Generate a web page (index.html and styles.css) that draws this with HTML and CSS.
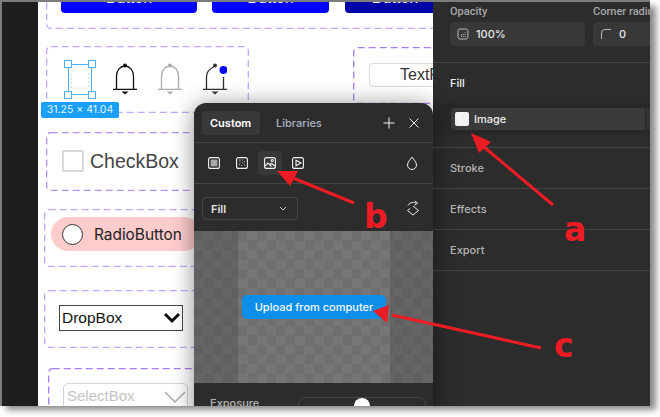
FILE: index.html
```html
<!DOCTYPE html>
<html lang="en">
<head>
    <meta charset="UTF-8">
    <title>Image fill</title>
    <link rel="stylesheet" href="styles.css">
</head>
<body>
<div class="shot">
    <div class="rail"></div>

    <div class="canvas">
        <svg class="frame frame-buttons"><rect/></svg>
        <div class="btn btn-1">Button</div>
        <div class="btn btn-2">Button</div>
        <div class="btn btn-3">Button</div>

        <svg class="frame frame-bells"><rect/></svg>
        <svg class="bell bell-ghost" viewBox="0 0 24 34"><path d="M3.5 27V14a8.5 10 0 0 1 17 0V27H3.5z"/></svg>
        <div class="selection">
            <i class="handle h-tl"></i><i class="handle h-tr"></i><i class="handle h-bl"></i><i class="handle h-br"></i>
        </div>
        <div class="size-tag">31.25 × 41.04</div>
        <svg class="bell bell-black" viewBox="0 0 24 34">
            <path d="M3.5 27V14a8.5 10 0 0 1 17 0V27M0 27.3H24"/>
            <circle cx="12" cy="3.5" r="2"/><path class="fill" d="M8.5 29.5h7l-3.5 3z"/>
        </svg>
        <svg class="bell bell-grey" viewBox="0 0 24 34">
            <path d="M3.5 27V14a8.5 10 0 0 1 17 0V27M0 27.3H24"/>
            <circle cx="12" cy="3.5" r="2"/><path class="fill" d="M8.5 29.5h7l-3.5 3z"/>
        </svg>
        <svg class="bell bell-dot" viewBox="0 0 24 34">
            <path d="M3.5 27V14c0-4 3-7 8.5-10M20.5 15V27M0 27.3H24"/>
            <circle cx="12" cy="3.5" r="2"/><path class="fill" d="M8.5 29.5h7l-3.5 3z"/>
            <circle class="dot" cx="20.5" cy="8" r="4"/>
        </svg>

        <svg class="frame frame-text dark"><rect/></svg>
        <div class="textfield">TextField</div>

        <svg class="frame frame-check mid"><rect/></svg>
        <div class="checkbox"><span class="check-box"></span>CheckBox</div>

        <svg class="frame frame-radio"><rect/></svg>
        <div class="radio"><span class="radio-dot"></span>RadioButton</div>

        <svg class="frame frame-drop"><rect/></svg>
        <div class="dropbox">DropBox
            <svg class="chev" viewBox="0 0 18 12"><path d="M2 2l7 7 7-7"/></svg>
        </div>

        <svg class="frame frame-select dark"><rect/></svg>
        <div class="selectbox">SelectBox
            <svg class="chev-thin" viewBox="0 0 22 14"><path d="M1 2l10 10L21 2"/></svg>
        </div>
    </div>

    <div class="inspector">
        <div class="props">
            <div class="prop">
                <div class="prop-label">Opacity</div>
                <div class="field">
                    <svg class="ico" viewBox="0 0 12 12"><rect x="1" y="1" width="10" height="10" rx="2"/><path class="dots" d="M8 4v5M5 7v2M9 6.5H3M9 8.5H3"/></svg>
                    100%
                </div>
            </div>
            <div class="prop">
                <div class="prop-label">Corner radius</div>
                <div class="field">
                    <svg class="ico" viewBox="0 0 12 12"><path d="M1.5 11V5a3.5 3.5 0 0 1 3.5-3.5h6"/></svg>
                    0
                </div>
            </div>
        </div>
        <div class="section-head bright">Fill</div>
        <div class="fill-band">
            <div class="fill-row">
                <span class="swatch"></span>Image
            </div>
            <div class="fill-rest"></div>
        </div>
        <div class="section-head line-top">Stroke</div>
        <div class="section-head line-top">Effects</div>
        <div class="section-head line-top line-bottom">Export</div>
    </div>

    <div class="popover">
        <div class="pop-head">
            <span class="tab active">Custom</span>
            <span class="tab">Libraries</span>
            <svg class="head-ico plus" viewBox="0 0 12 12"><path d="M6 .5v11M.5 6h11"/></svg>
            <svg class="head-ico close" viewBox="0 0 10 10"><path d="M.5.5l9 9M9.5.5l-9 9"/></svg>
        </div>
        <div class="pop-types">
            <span class="type">
                <svg viewBox="0 0 12 12"><rect x=".6" y=".6" width="10.8" height="10.8" rx="2"/><rect class="solid" x="2.6" y="2.6" width="6.8" height="6.8"/></svg>
            </span>
            <span class="type">
                <svg viewBox="0 0 12 12"><rect x=".6" y=".6" width="10.8" height="10.8" rx="2"/><path class="dots" d="M3 3h1.5M6 3h1M8 4.5h1M3.5 5h1M6 6h1.5M3 7.5h1M5 8.5h1M8 8h1"/></svg>
            </span>
            <span class="type active">
                <svg viewBox="0 0 12 12"><rect x=".6" y=".6" width="10.8" height="10.8" rx="2"/><path d="M1 9l3-3 3.5 3.5M6 7.5l1.5-1L11 9"/><circle cx="8.2" cy="3.6" r="1.1"/></svg>
            </span>
            <span class="type">
                <svg viewBox="0 0 12 12"><rect x=".6" y=".6" width="10.8" height="10.8" rx="2"/><path d="M4 3.2v5.6L9 6z"/></svg>
            </span>
            <svg class="drop" viewBox="0 0 12 14"><path d="M6 1C4.500 3.500 1.500 6 1.500 9a4.500 4.500 0 0 0 9 0C10.500 6 7.500 3.500 6 1z"/></svg>
        </div>
        <div class="pop-mode">
            <div class="mode-select">Fill
                <svg class="mini-chev" viewBox="0 0 8 5"><path d="M1 1l3 3 3-3"/></svg>
            </div>
            <svg class="swap" viewBox="0 0 14 16"><path d="M7 6l5.500 4.500L7 15 1.500 10.500 4 8.500M2 5.500C3 3 6.500 1.500 10 3M9 .8l2.500 2.500L8.500 5"/></svg>
        </div>
        <div class="preview">
            <div class="preview-image"></div>
            <div class="upload">Upload from computer</div>
        </div>
        <div class="pop-foot">
            <span class="foot-label">Exposure</span>
            <div class="slider"><span class="knob"></span></div>
        </div>
    </div>

    <svg class="marks" viewBox="0 0 660 417">
        <path d="M553 205L484 147"/>
        <path class="head" d="M471 133L491 142L479 153z"/>
        <path d="M354 203L293 178"/>
        <path class="head" d="M277 171L298 171L290 186z"/>
        <path d="M541 348L392 315"/>
        <path class="head" d="M373 311L389 305L387 323z"/>
        <text x="564" y="241">a</text>
        <text x="364" y="228">b</text>
        <text x="554" y="357">c</text>
    </svg>
</div>
</body>
</html>
```

FILE: styles.css
```css
* {
    box-sizing: border-box;
}
body {
    margin: 0;
    background: #fff;
    font-family: Inter, "Liberation Sans", sans-serif;
}
.shot {
    position: relative;
    width: 650px;
    height: 406px;
    display: flex;
    overflow: hidden;
    border-top: 2px solid #7c7c7c;
    border-left: 2px solid #7c7c7c;
}
body::after {
    content: "";
    position: absolute;
    left: 6px;
    top: 6px;
    width: 650px;
    height: 404px;
    background: #8a8a8a;
    filter: blur(3px);
    z-index: -1;
}
.rail {
    width: 36px;
    background: #1e1e1e;
}

/* canvas, everything on it sits where the designer dropped it */
.canvas {
    position: relative;
    width: 395px;
    background: #fff;
    overflow: hidden;
}
.frame {
    position: absolute;
    fill: none;
    stroke: #c6a5fc;
    stroke-width: 1.3;
    stroke-dasharray: 7 4;
}
.frame rect {
    x: 0.7px;
    y: 0.7px;
    width: calc(100% - 1.4px);
    height: calc(100% - 1.4px);
    rx: 4px;
}
.frame.mid {
    stroke: #b88ff8;
}
.frame.dark {
    stroke: #a77cf0;
}
.frame-buttons { left: 8px; top: -30px; width: 420px; height: 57px; }
.frame-bells { left: 8px; top: 44px; width: 203px; height: 67px; }
.frame-text { left: 315px; top: 45px; width: 120px; height: 57px; }
.frame-check { left: 8px; top: 130px; width: 180px; height: 59px; }
.frame-radio { left: 6px; top: 207px; width: 180px; height: 58px; }
.frame-drop { left: 6px; top: 288px; width: 180px; height: 58px; }
.frame-select { left: 10px; top: 366px; width: 180px; height: 60px; }

.btn {
    position: absolute;
    top: -14px;
    height: 25px;
    background: #0000fe;
    color: #fff;
    border-radius: 4px;
    text-align: center;
    font: 16px/20px "Liberation Sans", sans-serif;
}
.btn-1 { left: 23px; width: 136px; }
.btn-2 { left: 174px; width: 117px; }
.btn-3 { left: 307px; width: 100px; background: #0000a8; }

.bell {
    position: absolute;
    top: 60px;
    width: 24px;
    height: 34px;
    fill: none;
    stroke-width: 1.3;
}
.bell .fill { stroke: none; }
.bell-black { left: 75px; stroke: #111; }
.bell-black circle, .bell-black .fill { fill: #111; stroke: none; }
.bell-grey { left: 120px; stroke: #aaa; }
.bell-grey circle, .bell-grey .fill { fill: #aaa; stroke: none; }
.bell-dot { left: 165px; stroke: #333; }
.bell-dot circle, .bell-dot .fill { fill: #333; stroke: none; }
.bell-dot .dot { fill: #0000fe; }
.bell-ghost { left: 30px; top: 59px; stroke: #ddd; stroke-dasharray: 2 2; stroke-width: 1; }

.selection {
    position: absolute;
    left: 30px;
    top: 62px;
    width: 24px;
    height: 31px;
    border: 1.5px solid #4db2fb;
}
.handle {
    position: absolute;
    width: 8px;
    height: 8px;
    background: #fff;
    border: 1.5px solid #4db2fb;
}
.h-tl { left: -5px; top: -5px; }
.h-tr { right: -5px; top: -5px; }
.h-bl { left: -5px; bottom: -5px; }
.h-br { right: -5px; bottom: -5px; }
.size-tag {
    position: absolute;
    left: 3px;
    top: 100px;
    width: 78px;
    height: 16px;
    background: #18a0fb;
    border-radius: 2px;
    color: #e6f5ff;
    font-size: 10.5px;
    line-height: 16px;
    text-align: center;
    white-space: nowrap;
}

.textfield {
    position: absolute;
    left: 331px;
    top: 61px;
    width: 120px;
    height: 24px;
    padding-left: 30px;
    border: 1.5px solid #dcdce2;
    border-radius: 4px;
    color: #333;
    font: 16px/21px "Liberation Sans", sans-serif;
}
.checkbox {
    position: absolute;
    left: 24px;
    top: 148px;
    display: flex;
    align-items: center;
    gap: 6px;
    color: #444;
    font: 19.5px/22px "Liberation Sans", sans-serif;
}
.check-box {
    width: 22px;
    height: 22px;
    border: 2px solid #d9d9d9;
    border-radius: 2px;
}
.radio {
    position: absolute;
    left: 13px;
    top: 215px;
    width: 150px;
    height: 34px;
    padding-left: 11px;
    display: flex;
    align-items: center;
    gap: 11px;
    background: #ffcccc;
    border-radius: 17px;
    color: #222;
    font-size: 15.4px;
}
.radio-dot {
    width: 21px;
    height: 21px;
    border: 1px solid #333;
    border-radius: 50%;
    background: #fff;
}
.dropbox {
    position: absolute;
    left: 21px;
    top: 303px;
    width: 124px;
    height: 26px;
    padding-left: 2px;
    border: 1px solid #444;
    color: #111;
    font: 15.5px/24px "Liberation Sans", sans-serif;
}
.chev {
    position: absolute;
    right: 1px;
    top: 6px;
    width: 18px;
    height: 12px;
    fill: none;
    stroke: #111;
    stroke-width: 3;
}
.selectbox {
    position: absolute;
    left: 25px;
    top: 381px;
    width: 125px;
    height: 40px;
    padding-left: 3px;
    border: 1px solid #d4d4d4;
    border-radius: 5px;
    color: #c4c4c4;
    font: 15px/24px "Liberation Sans", sans-serif;
}
.chev-thin {
    position: absolute;
    right: 1px;
    top: 6px;
    width: 22px;
    height: 14px;
    fill: none;
    stroke: #aaa;
    stroke-width: 1.5;
}

/* right panel */
.inspector {
    width: 217px;
    background: #2c2c2c;
    color: #c0c0c0;
    font-size: 11px;
    font-weight: 500;
}
.props {
    height: 61px;
    padding-left: 17px;
    display: flex;
    gap: 8px;
    border-bottom: 1px solid #444;
}
.prop-label {
    height: 20px;
    padding-top: 3px;
    font: 500 11px/13px Roboto, sans-serif;
    color: #a8a8a8;
    white-space: nowrap;
}
.field {
    width: 135px;
    height: 24px;
    padding-left: 7px;
    display: flex;
    align-items: center;
    gap: 7px;
    background: #383838;
    border-radius: 4px;
    color: #e8e8e8;
}
.ico {
    width: 12px;
    height: 12px;
    fill: none;
    stroke: #b5b5b5;
}
.ico .dots {
    stroke-dasharray: 1 1;
    stroke-width: .8;
}
.section-head {
    height: 41px;
    padding-left: 17px;
    display: flex;
    align-items: center;
    color: #b4b4b4;
}
.section-head.bright {
    height: 40px;
    color: #f0f0f0;
}
.line-top {
    border-top: 1px solid #444;
}
.line-bottom {
    border-bottom: 1px solid #444;
    height: 42px;
}
.fill-band {
    height: 44px;
    padding-top: 5px;
    display: flex;
    background: linear-gradient(#282828 32px, #2c2c2c 32px);
}
.fill-row {
    width: 195px;
    height: 22px;
    margin-left: 18px;
    padding-left: 4px;
    display: flex;
    align-items: center;
    gap: 5px;
    background: #3a3a3a;
    border-radius: 4px 0 0 4px;
    color: #ececec;
}
.swatch {
    width: 14px;
    height: 14px;
    background: #f2f2f2;
    border-radius: 2px;
}
.fill-rest {
    width: 4px;
    height: 22px;
    margin-left: 1px;
    background: #333;
}

/* popover over the canvas */
.popover {
    position: absolute;
    left: 192px;
    top: 101px;
    width: 239px;
    height: 320px;
    background: #2c2c2c;
    border-radius: 12px 12px 0 0;
    box-shadow: 0 2px 22px rgba(0, 0, 0, .45);
    color: #ddd;
    font-size: 11px;
    font-weight: 500;
    overflow: hidden;
}
.pop-head {
    height: 40px;
    padding: 8px 8px 0;
    display: flex;
    align-items: flex-start;
    border-bottom: 1px solid #444;
}
.tab {
    height: 24px;
    padding: 0 8px;
    margin-right: 8px;
    line-height: 24px;
    border-radius: 4px;
    color: #aeb4c4;
}
.tab.active {
    width: 58px;
    background: #383838;
    color: #fff;
    font-weight: 600;
}
.head-ico {
    stroke: #eee;
    fill: none;
}
.plus {
    width: 12px;
    height: 12px;
    margin: 6px 0 0 auto;
}
.close {
    width: 10px;
    height: 10px;
    margin: 7px 6px 0 14px;
}
.pop-types {
    height: 41px;
    padding: 8px 8px 0;
    display: flex;
    align-items: flex-start;
    gap: 4px;
    border-bottom: 1px solid #444;
}
.type {
    width: 24px;
    height: 24px;
    display: flex;
    align-items: center;
    justify-content: center;
    border-radius: 4px;
}
.type.active {
    background: #383838;
}
.type svg {
    width: 12px;
    height: 12px;
    fill: none;
    stroke: #f2f2f2;
    stroke-width: 1.1;
}
.type .solid {
    fill: #a8a8a8;
    stroke: none;
}
.type .dots {
    stroke: #bbb;
    stroke-width: 1;
}
.drop {
    width: 12px;
    height: 14px;
    margin: 5px 7px 0 auto;
    fill: none;
    stroke: #eee;
}
.pop-mode {
    height: 47px;
    padding: 13px 8px 0;
    display: flex;
    align-items: flex-start;
}
.mode-select {
    width: 96px;
    height: 23px;
    padding: 0 8px;
    display: flex;
    align-items: center;
    justify-content: space-between;
    border: 1px solid #444;
    border-radius: 4px;
    color: #e4e4e4;
    font-weight: 600;
}
.mini-chev {
    width: 8px;
    height: 5px;
    margin-right: 2px;
    fill: none;
    stroke: #ccc;
}
.swap {
    width: 14px;
    height: 16px;
    margin: 3px 5px 0 auto;
    fill: none;
    stroke: #eee;
}
.preview {
    position: relative;
    height: 152px;
    display: flex;
    justify-content: center;
    background: repeating-conic-gradient(#656565 0 25%, #606060 0 50%) 0 0 / 19px 19px;
}
.preview-image {
    width: 152px;
    height: 152px;
    background: repeating-conic-gradient(#767676 0 25%, #6f6f6f 0 50%) 0 0 / 19px 19px;
}
.upload {
    position: absolute;
    left: 48px;
    top: 64px;
    width: 144px;
    height: 24px;
    background: #0d8ee9;
    border-radius: 5px;
    color: #f4faff;
    line-height: 24px;
    text-align: center;
}
.pop-foot {
    padding: 14px 7px 0 16px;
    display: flex;
    justify-content: space-between;
    color: #b4b4b4;
}
.foot-label {
    line-height: 13px;
}
.slider {
    position: relative;
    width: 128px;
    height: 24px;
    border: 1px solid #444;
    border-radius: 8px;
}
.knob {
    position: absolute;
    left: 55px;
    top: 0;
    width: 16px;
    height: 16px;
    border-radius: 50%;
    background: #fff;
}

/* red callouts drawn on top of the shot */
.marks {
    position: absolute;
    left: -2px;
    top: -2px;
    width: 660px;
    height: 417px;
    fill: none;
    stroke: #ed1c24;
    stroke-width: 3;
}
.marks .head {
    fill: #ed1c24;
    stroke: none;
}
.marks text {
    fill: #ed1c24;
    stroke: none;
    font: bold 33px "DejaVu Sans", sans-serif;
}
```
